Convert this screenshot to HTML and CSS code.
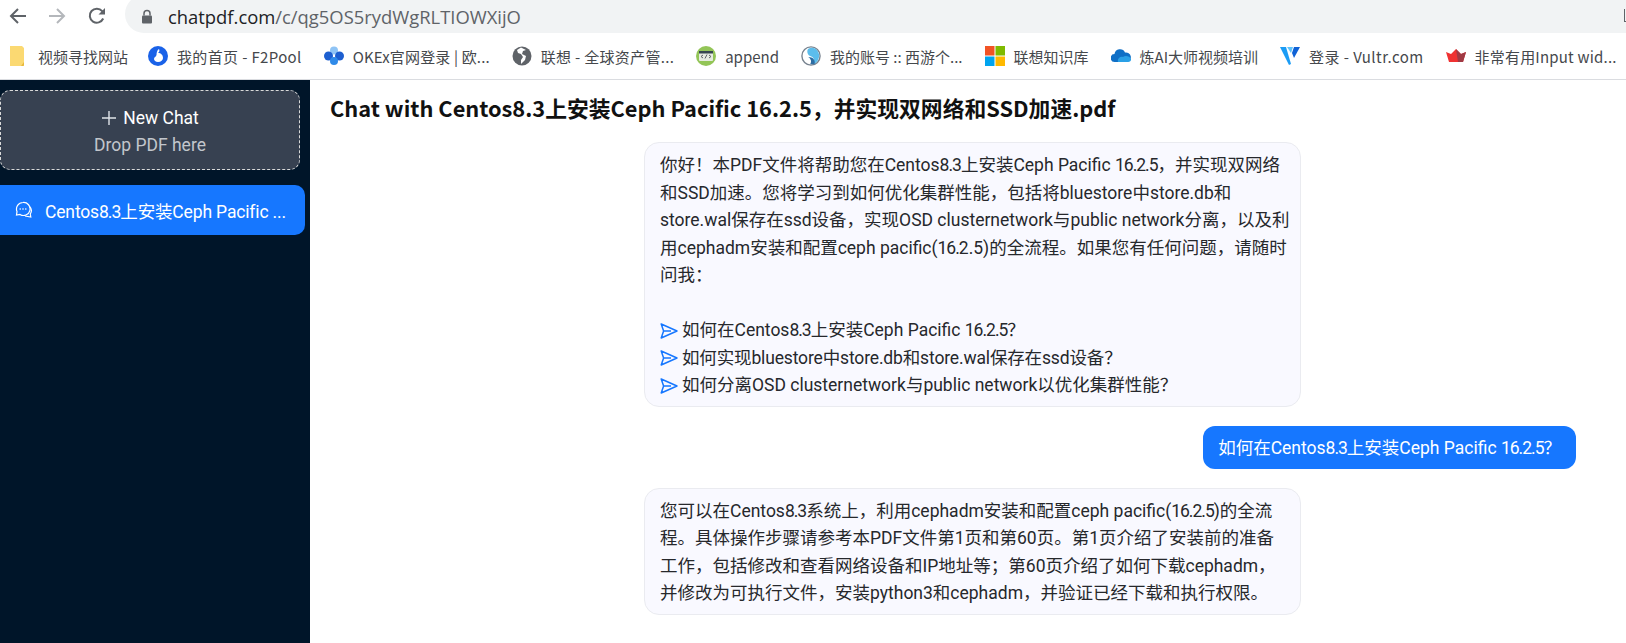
FILE: index.html
```html
<!DOCTYPE html>
<html lang="zh-CN">
<head>
<meta charset="utf-8">
<title>ChatPDF</title>
<link rel="stylesheet" href="styles.css">
</head>
<body>
<svg class="defs" width="0" height="0">
  <symbol id="send" viewBox="0 0 20 20"><path d="M2.200 3 18 10 2.200 17 4.600 10Z M4.600 10H12" fill="none" stroke="#1677ff" stroke-width="1.500" stroke-linejoin="round"/></symbol>
</svg>
<header class="toolbar">
  <svg class="nav" viewBox="0 0 20 20"><path d="M18 10H3M10 3 3 10l7 7" fill="none" stroke="#5f6368" stroke-width="2"/></svg>
  <svg class="nav nav-fwd" viewBox="0 0 20 20"><path d="M2 10h15M10 3l7 7-7 7" fill="none" stroke="#b4b7bb" stroke-width="2"/></svg>
  <svg class="nav nav-reload" viewBox="0 0 20 20"><path d="M16.200 12.500A7 7 0 1 1 15.200 5.200L17 7" fill="none" stroke="#5f6368" stroke-width="2"/><path d="M18 2v6.500h-6.500z" fill="#5f6368"/></svg>
  <div class="address">
    <svg class="lock" viewBox="0 0 12 14"><path d="M3 6V4a3 3 0 0 1 6 0v2" fill="none" stroke="#5f6368" stroke-width="1.500"/><rect x="1" y="6" width="10" height="8" rx="1" fill="#5f6368"/></svg>
    <span class="url">chatpdf.com<span class="url-path">/c/qg5OS5rydWgRLTIOWXijO</span></span>
    <span class="edge-icon"></span>
  </div>
</header>
<nav class="bookmarks">
  <a class="bm bm-1"><svg class="fav" viewBox="0 0 20 20"><path d="M1 0h12l2 2v17a1 1 0 0 1-1 1H1z" fill="#fbd972"/><path d="M12 20l3-4v3a1 1 0 0 1-1 1z" fill="#e8b93c"/></svg><span>视频寻找网站</span></a>
  <a class="bm bm-2"><svg class="fav" viewBox="0 0 20 20"><circle cx="10" cy="10" r="10" fill="#1a62e8"/><path d="M11 3c1 2 0 3-1 4 3 0 5 2 5 5 0 2-2 4-5 4-2.500 0-4-1.500-4-3 0-2 2-2 2.500-4C8.500 7 9 4 11 3z" fill="#fff"/></svg><span>我的首页 - F2Pool</span></a>
  <a class="bm bm-3"><svg class="fav" viewBox="0 0 20 20"><circle cx="10" cy="4.500" r="4" fill="#8fc4f5"/><circle cx="4.500" cy="10" r="4.500" fill="#1d5fd0"/><circle cx="15.500" cy="10" r="4.500" fill="#1d5fd0"/><circle cx="10" cy="15" r="4" fill="#2f8ae8"/></svg><span>OKEx官网登录 | 欧...</span></a>
  <a class="bm bm-4"><svg class="fav" viewBox="0 0 20 20"><circle cx="10" cy="10" r="9.500" fill="#5f6368"/><path d="M9 1.500 5 4l1 3 3 1 2 3-2 3v4l4-4 1-4-4-2 1-3 3-1z" fill="#fff"/></svg><span>联想 - 全球资产管...</span></a>
  <a class="bm bm-5"><svg class="fav" viewBox="0 0 20 20"><circle cx="10" cy="10" r="10" fill="#93c557"/><rect x="3" y="5" width="14" height="10" rx="1" fill="#e6ebe0"/><rect x="3" y="5" width="14" height="2.500" fill="#37474f"/><path d="M7 9l-2 1.500L7 12M13 9l2 1.500L13 12M11 8.500 9 12.500" fill="none" stroke="#5f6368"/></svg><span>append</span></a>
  <a class="bm bm-6"><svg class="fav" viewBox="0 0 22 22"><circle cx="11" cy="11" r="10" fill="#fff" stroke="#78838f" stroke-width="1.500"/><path d="M8 3c5-3 11 0 12 7 0 5-3 9-6 10 1-5 0-8-4-9C7 10 6 5 8 3z" fill="#5cbdec"/><path d="M10 20c2-3 1-6-2-8 5 0 8 3 7 8z" fill="#2d6da3"/></svg><span>我的账号 :: 西游个...</span></a>
  <a class="bm bm-7"><svg class="fav" viewBox="0 0 20 20"><rect width="9.500" height="9.500" fill="#f25325"/><rect x="10.500" width="9.500" height="9.500" fill="#7fba00"/><rect y="10.500" width="9.500" height="9.500" fill="#00a4ef"/><rect x="10.500" y="10.500" width="9.500" height="9.500" fill="#ffb900"/></svg><span>联想知识库</span></a>
  <a class="bm bm-8"><svg class="fav" viewBox="0 0 20 20"><path d="M4 16a4 4 0 0 1-.5-8A5.500 5.500 0 0 1 14 6.500a4.500 4.500 0 0 1 2 9.500z" fill="#0f6fc6"/><path d="M7 16c-1-3 2-6 5-5 2-2 7-1 8 2 .3 2-1 3-3 3z" fill="#2aa0e6"/></svg><span>炼AI大师视频培训</span></a>
  <a class="bm bm-9"><svg class="fav" viewBox="0 0 20 20"><path d="M0 1h6l5 17-2 1z" fill="#1b9cf5"/><path d="M7 1h6l-2 6z" fill="#5fc4fb"/><path d="M14 1h6l-6 11-2-5z" fill="#0f62d6"/></svg><span>登录 - Vultr.com</span></a>
  <a class="bm bm-10"><svg class="fav" viewBox="0 0 20 20"><path d="M0 6l5 2 5-5 5 5 5-2-3 10H3z" fill="#ef3232"/><path d="M10 3l5 5 5-2-3 10h-5z" fill="#9f3a44"/></svg><span>非常有用Input wid...</span></a>
</nav>
<div class="app">
  <aside class="sidebar">
    <div class="drop">
      <div class="drop-title"><svg class="plus" viewBox="0 0 16 16"><path d="M8 1v14M1 8h14" stroke="#dfe3e8" stroke-width="1.400" fill="none"/></svg>New Chat</div>
      <div class="drop-sub">Drop PDF here</div>
    </div>
    <div class="chat-item">
      <svg class="chat-icon" viewBox="0 0 18 18"><path d="M8 1.500a6.500 6.500 0 0 0-6 9L1.500 14l3.500-.6A6.500 6.500 0 1 0 8 1.500z" fill="none" stroke="#fff" stroke-width="1.200"/><path d="M14.500 5.500a6 6 0 0 1 .8 7.500l.5 3-5.800-1" fill="none" stroke="#fff" stroke-width="1.200"/><circle cx="5.200" cy="8" r=".8" fill="#fff"/><circle cx="8" cy="8" r=".8" fill="#fff"/><circle cx="10.800" cy="8" r=".8" fill="#fff"/></svg>
      <span class="chat-name tight">Centos<span class="num">8.3</span>上安装Ceph Pacific ...</span>
    </div>
  </aside>
  <main class="main">
    <h1 class="title">Chat with Centos8.3上安装Ceph Pacific 16.2.5，并实现双网络和SSD加速.pdf</h1>
    <div class="thread">
      <div class="bubble"><div class="line">你好！本PDF文件将帮助您在Centos<span class="num">8.3</span>上安装Ceph Pacific <span class="num">16.2.5</span>，并实现双网络</div><div class="line">和SSD加速。您将学习到如何优化集群性能，包括将bluestore中store.db和</div><div class="line">store.wal保存在ssd设备，实现OSD clusternetwork与public network分离，以及利</div><div class="line">用cephadm安装和配置ceph pacific(<span class="num">16.</span>2.5)的全流程。如果您有任何问题，请随时</div><div class="line">问我：</div><div class="line">&nbsp;</div>
        <div class="ask"><svg class="send"><use href="#send"/></svg><span>如何在Centos<span class="num">8.3</span>上安装Ceph Pacific <span class="num">16.2.5</span>？</span></div>
        <div class="ask"><svg class="send"><use href="#send"/></svg><span class="tight">如何实现bluestore中store.db和store.wal保存在ssd设备？</span></div>
        <div class="ask"><svg class="send"><use href="#send"/></svg><span>如何分离OSD clusternetwork与public network以优化集群性能？</span></div>
      </div>
      <div class="user-row"><div class="user-bubble">如何在Centos<span class="num">8.3</span>上安装Ceph Pacific <span class="num">16.2.5</span>？</div></div>
      <div class="bubble"><div class="line">您可以在Centos<span class="num">8.3</span>系统上，利用cephadm安装和配置ceph pacific(<span class="num">16.2.5</span>)的全流</div><div class="line">程。具体操作步骤请参考本PDF文件第1页和第60页。第1页介绍了安装前的准备</div><div class="line">工作，包括修改和查看网络设备和IP地址等；第60页介绍了如何下载cephadm，</div><div class="line">并修改为可执行文件，安装python3和cephadm，并验证已经下载和执行权限。</div></div>
    </div>
  </main>
</div>
</body>
</html>
```

FILE: styles.css
```css
* { box-sizing: border-box; }
html, body { margin: 0; height: 643px; overflow: hidden; background: #fff; }
body { font-family: Roboto, "Noto Sans CJK SC", sans-serif; color: #1f2328; }
.defs { position: absolute; }
.tight { letter-spacing: -0.15px; }
.num { letter-spacing: -1px; }

.toolbar { height: 33px; display: flex; align-items: center; overflow: hidden; background: #fff; }
.nav { width: 20px; height: 20px; flex: none; margin-left: 8px; margin-top: -2px; }
.nav-fwd { margin-left: 19px; }
.nav-reload { margin-left: 20px; }
.address { flex: 1; height: 38px; margin-top: -5px; margin-left: 18px; padding: 5px 0 0 16px; background: #f1f3f4; border-radius: 19px 0 0 19px; display: flex; align-items: center; gap: 15px; }
.lock { width: 12px; height: 15px; flex: none; }
.url { font-family: "Open Sans", sans-serif; font-size: 18.400px; color: #202124; flex: 1; }
.url-path { color: #5f6368; }
.edge-icon { width: 2px; height: 13px; border-left: 1px solid #5f6368; border-bottom: 1px solid #5f6368; margin-bottom: 3px; }

.bookmarks { height: 47px; border-bottom: 1px solid #dadce0; display: flex; align-items: center; padding-left: 9px; background: #fff; font-family: "Noto Sans CJK SC", sans-serif; font-size: 15px; color: #45484c; white-space: nowrap; }
.bm { display: flex; align-items: center; gap: 9px; margin-right: 22px; }
.bm-1 { margin-right: 20px; }
.bm-2 span { letter-spacing: .35px; }
.bm-3 span { letter-spacing: .15px; }
.bm-4 span { letter-spacing: .3px; }
.bm-9 span { letter-spacing: .45px; }
.bm-10 span { letter-spacing: .2px; }
.fav { width: 20px; height: 20px; flex: none; }

.app { display: flex; height: 563px; }
.sidebar { width: 310px; flex: none; background: #001529; padding-top: 10px; color: #fff; }
.drop { width: 300px; height: 80px; padding-top: 3px; background: #374151; border: 1px dashed #d9d9d9; border-radius: 10px; display: flex; flex-direction: column; align-items: center; justify-content: center; }
.drop-title { font-size: 17.500px; line-height: 27px; display: flex; align-items: center; gap: 6px; }
.plus { width: 16px; height: 16px; }
.drop-sub { font-size: 17.500px; line-height: 27px; color: #c2c6cc; }
.chat-item { width: 305px; height: 50px; margin-top: 15px; background: #1677ff; border-radius: 0 10px 10px 0; display: flex; align-items: center; padding-left: 15px; gap: 12px; font-size: 17.500px; }
.chat-icon { width: 18px; height: 18px; flex: none; }

.main { flex: 1; min-width: 0; padding: 0 0 0 20px; }
.title { margin: 14px 0 0 0; font-family: "Noto Sans CJK SC", sans-serif; font-size: 21.800px; line-height: 28px; font-weight: 700; color: #111; }
.thread { margin-top: 20px; padding-left: 314px; display: flex; flex-direction: column; align-items: flex-start; gap: 19px; }
.bubble { width: 657px; padding: 9px 15px 6px; background: #f9f9ff; border: 1px solid #eaebf0; border-radius: 15px; font-size: 17.500px; line-height: 27.500px; color: #26282c; white-space: nowrap; }
.ask { display: flex; align-items: center; gap: 3px; }
.send { width: 20px; height: 20px; flex: none; margin-left: -1px; }
.user-row { width: 932px; display: flex; justify-content: flex-end; }
.user-bubble { padding: 9px 15px 7px; height: 43px; background: #1677ff; border-radius: 12px; color: #fff; font-size: 17.500px; line-height: 27px; white-space: nowrap; }
```
